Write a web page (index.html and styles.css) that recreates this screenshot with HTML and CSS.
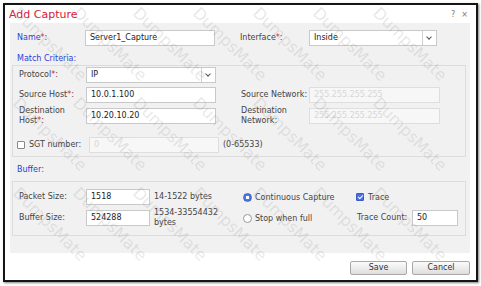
FILE: index.html
```html
<!DOCTYPE html>
<html lang="en">
<head>
    <meta charset="UTF-8">
    <title>Add Capture</title>
    <link rel="stylesheet" href="styles.css">
</head>
<body>
    <div class="dialog">
        <div class="titlebar">
            <span class="title">Add Capture</span>
            <span class="tools"><span>?</span><span>&#215;</span></span>
        </div>

        <div class="panel">
            <div class="row top-row">
                <span class="lbl blue lbl-name">Name<span class="req">*</span>:</span>
                <div class="field w130">Server1_Capture</div>
                <span class="lbl lbl-iface">Interface<span class="req">*</span>:</span>
                <div class="field select w128">Inside<span class="arrow"></span></div>
            </div>

            <div class="section-title">Match Criteria:</div>
            <div class="group match">
                <div class="row">
                    <span class="lbl lbl-left">Protocol<span class="req">*</span>:</span>
                    <div class="field select w130">IP<span class="arrow"></span></div>
                </div>
                <div class="row">
                    <span class="lbl lbl-left">Source Host<span class="req">*</span>:</span>
                    <div class="field w130">10.0.1.100</div>
                    <span class="lbl lbl-right">Source Network:</span>
                    <div class="field disabled w131">255.255.255.255</div>
                </div>
                <div class="row tall">
                    <span class="lbl lbl-left two">Destination<br>Host<span class="req">*</span>:</span>
                    <div class="field w130">10.20.10.20</div>
                    <span class="lbl lbl-right two">Destination<br>Network:</span>
                    <div class="field disabled w131">255.255.255.255</div>
                </div>
                <div class="row sgt">
                    <span class="check"></span>
                    <span class="lbl lbl-sgt">SGT number:</span>
                    <div class="field disabled w130">0</div>
                    <span class="hint">(0-65533)</span>
                </div>
            </div>

            <div class="section-title">Buffer:</div>
            <div class="group buffer">
                <div class="row">
                    <span class="lbl lbl-left">Packet Size:</span>
                    <div class="field w64">1518</div>
                    <span class="hint range">14-1522 bytes</span>
                    <span class="radio on"></span>
                    <span class="opt opt-radio">Continuous Capture</span>
                    <span class="check on"></span>
                    <span class="opt">Trace</span>
                </div>
                <div class="row">
                    <span class="lbl lbl-left">Buffer Size:</span>
                    <div class="field w64">524288</div>
                    <span class="hint range two">1534-33554432<br>bytes</span>
                    <span class="radio"></span>
                    <span class="opt opt-radio">Stop when full</span>
                    <span class="lbl lbl-count">Trace Count:</span>
                    <div class="field w46">50</div>
                </div>
            </div>
        </div>

        <div class="footer">
            <button class="btn btn-save">Save</button>
            <button class="btn btn-cancel">Cancel</button>
        </div>
    </div>

    <!-- watermark tiles over the dialog -->
    <div class="watermark">
        <span>DumpsMate</span><span>DumpsMate</span><span>DumpsMate</span><span>DumpsMate</span>
        <span>DumpsMate</span><span>DumpsMate</span><span>DumpsMate</span>
        <span>DumpsMate</span><span>DumpsMate</span><span>DumpsMate</span><span>DumpsMate</span>
        <span>DumpsMate</span><span>DumpsMate</span><span>DumpsMate</span>
        <span>DumpsMate</span><span>DumpsMate</span><span>DumpsMate</span><span>DumpsMate</span>
        <span>DumpsMate</span><span>DumpsMate</span><span>DumpsMate</span>
    </div>
</body>
</html>
```

FILE: styles.css
```css
body {
    margin: 0;
    background: #fff;
    font-family: "DejaVu Sans", Verdana, sans-serif;
    font-size: 8px;
    color: #444;
    width: 481px;
    height: 286px;
    overflow: hidden;
    position: relative;
}
.dialog {
    margin: 3px 0 0 3px;
    width: 475px;
    height: 279px;
    box-sizing: border-box;
    border: 2px solid #151515;
    box-shadow: 1px 1px 2px rgba(0, 0, 0, 0.5);
    background: #fff;
    display: flex;
    flex-direction: column;
}
.titlebar {
    height: 18px;
    display: flex;
    align-items: center;
    justify-content: space-between;
    padding: 0 8px 0 4px;
}
.title {
    color: #d3203c;
    font-size: 11px;
}
.tools {
    display: flex;
    gap: 6px;
    color: #777;
    font-size: 8px;
}
.panel {
    margin: 0 6px 0 5px;
    height: 230px;
    background: #f1f1f1;
    padding-top: 7px;
    box-sizing: border-box;
}
.row {
    display: flex;
    align-items: center;
    height: 16px;
}
.row.tall {
    height: 18px;
}
.top-row {
    padding-left: 7px;
}
.lbl {
    white-space: nowrap;
    line-height: 10px;
}
.lbl .req {
    color: #e0203a;
}
.blue {
    color: #2b3fd8;
}
.lbl-name { width: 68px; }
.lbl-iface { width: 69px; margin-left: 25px; }
.lbl-left { width: 67px; }
.lbl-right { width: 68px; margin-left: 25px; }
.lbl-sgt { width: 60px; }
.lbl-count { width: 55px; margin-left: 2px; }
.field {
    height: 16px;
    box-sizing: border-box;
    border: 1px solid #c9c9c9;
    background: #fff;
    color: #222;
    padding: 0 4px;
    line-height: 14px;
    white-space: nowrap;
    position: relative;
}
.field.disabled {
    background: #f7f7f7;
    color: #d6d6d6;
    border-color: #dedede;
}
.select .arrow {
    position: absolute;
    right: 0;
    top: 0;
    width: 13px;
    height: 14px;
    border-left: 1px solid #d0d0d0;
}
.select .arrow::after {
    content: "";
    position: absolute;
    left: 4px;
    top: 4px;
    width: 3px;
    height: 3px;
    border-right: 1.5px solid #555;
    border-bottom: 1.5px solid #555;
    transform: rotate(45deg);
}
.w130 { width: 130px; }
.w128 { width: 128px; }
.w131 { width: 131px; }
.w64 { width: 64px; }
.w46 { width: 46px; }
.section-title {
    color: #2b3fd8;
    height: 12px;
    line-height: 12px;
    padding-left: 7px;
    margin-top: 7px;
}
.group {
    margin: 0 4px 0 2px;
    border: 1px solid #dcdcdc;
    padding-left: 6px;
}
.match {
    height: 92px;
    padding-top: 1px;
    box-sizing: border-box;
    display: flex;
    flex-direction: column;
    gap: 4px;
}
.match .row.sgt {
    margin-top: 8px;
    margin-left: -2px;
}
.check {
    width: 8px;
    height: 8px;
    box-sizing: border-box;
    border: 1px solid #888;
    background: #fff;
    border-radius: 1px;
    margin-right: 4px;
    position: relative;
}
.check.on {
    background: #4a6fe0;
    border-color: #3b5bc8;
    margin-left: 1px;
}
.check.on::after {
    content: "";
    position: absolute;
    left: 2px;
    top: 0;
    width: 2px;
    height: 4px;
    border-right: 1px solid #fff;
    border-bottom: 1px solid #fff;
    transform: rotate(45deg);
}
.hint {
    margin-left: 4px;
    color: #444;
    line-height: 10px;
}
.range {
    width: 89px;
}
.buffer {
    margin-top: 5px;
    height: 55px;
    box-sizing: border-box;
    padding-top: 7px;
    display: flex;
    flex-direction: column;
    gap: 5px;
}
.radio {
    width: 9px;
    height: 9px;
    box-sizing: border-box;
    border: 1px solid #999;
    border-radius: 50%;
    background: #fff;
    margin-right: 3px;
}
.radio.on {
    background: radial-gradient(circle, #fff 0 1.5px, #4a78e8 2px);
    border-color: #3a62c8;
}
.opt {
    color: #444;
}
.opt-radio {
    width: 100px;
}
.footer {
    flex: 1;
    display: flex;
    justify-content: flex-end;
    align-items: center;
    gap: 5px;
    padding: 2px 6px 0 0;
}
.btn {
    height: 14px;
    border: 1px solid #a9a9a9;
    border-radius: 2px;
    background: linear-gradient(#fbfbfb, #dedede);
    font-family: "DejaVu Sans", Verdana, sans-serif;
    font-size: 8px;
    color: #333;
    padding: 0;
}
.btn-save { width: 57px; }
.btn-cancel { width: 58px; }
.watermark {
    position: absolute;
    left: 0;
    top: 0;
    width: 481px;
    height: 286px;
    box-sizing: border-box;
    padding: 4px 0 0 22px;
    display: grid;
    grid-template-columns: repeat(7, 60px);
    grid-template-rows: repeat(3, 90px);
    overflow: hidden;
    pointer-events: none;
}
.watermark span {
    display: block;
    width: 90px;
    font-family: "DejaVu Sans", sans-serif;
    font-size: 16px;
    line-height: 18px;
    color: rgba(150, 150, 150, 0.22);
    transform: rotate(45deg);
    transform-origin: 0 0;
    white-space: nowrap;
}
```
